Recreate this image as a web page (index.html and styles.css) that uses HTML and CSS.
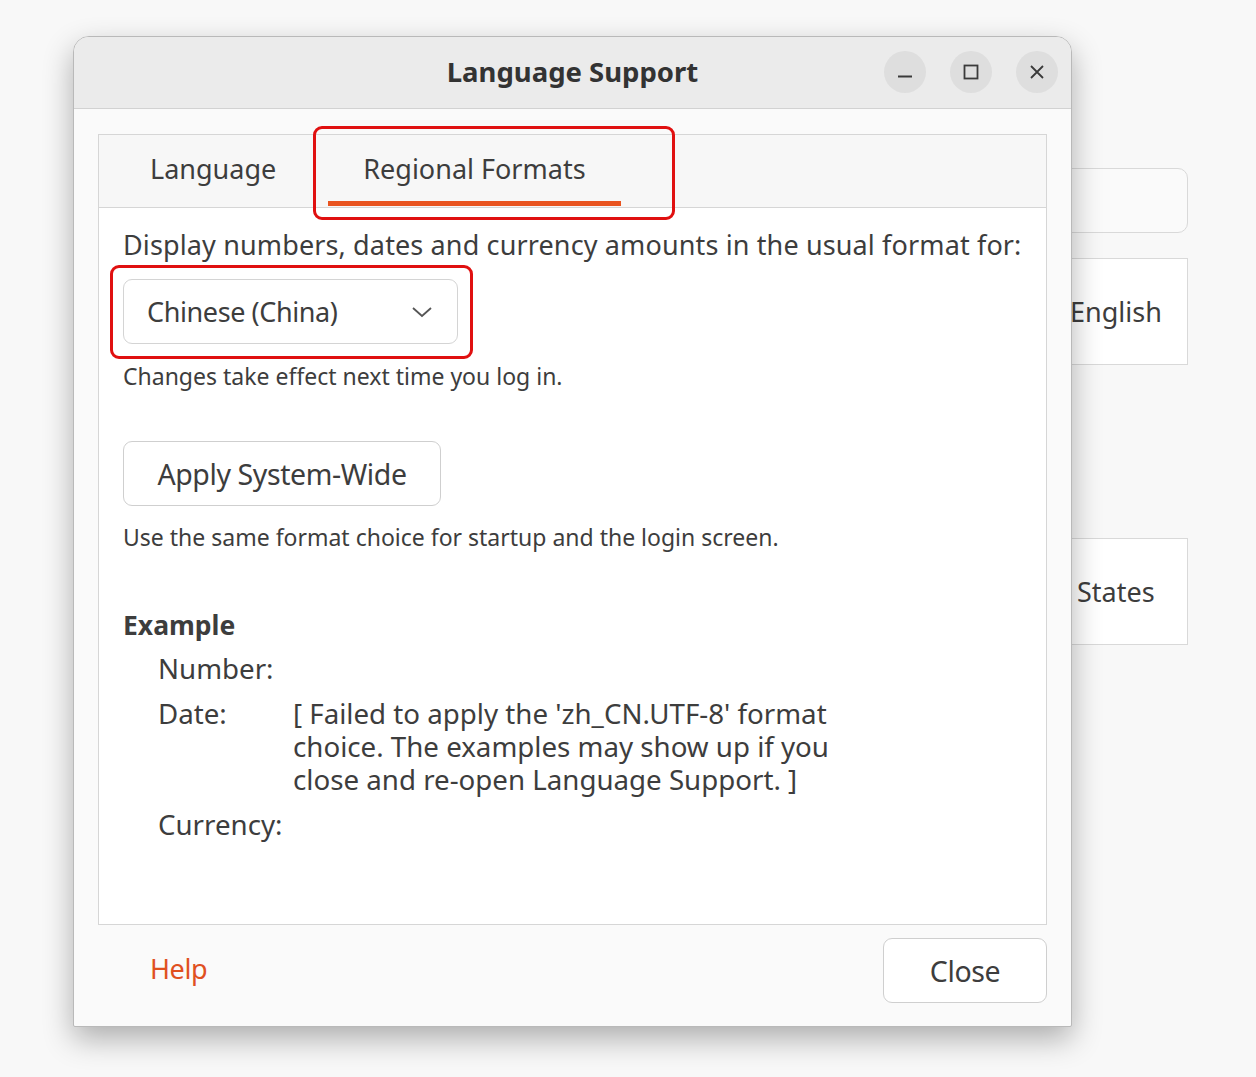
FILE: index.html
```html
<!DOCTYPE html>
<html lang="en">
<head>
  <meta charset="UTF-8">
  <title>Language Support</title>
  <link rel="stylesheet" href="styles.css">
</head>
<body>
<div class="desktop">
  <!-- the main window behind the dialog -->
  <div class="back-window">
    <div class="back-search"></div>
    <div class="back-row">English</div>
    <div class="back-row back-row-low">States</div>
  </div>

  <div class="dialog">
    <div class="titlebar">
      <div class="title">Language Support</div>
      <div class="win-buttons">
        <span class="win-btn">
          <svg width="16" height="16" viewBox="0 0 16 16"><path d="M1 12.5h14" stroke="#3a3a3a" stroke-width="1.8"/></svg>
        </span>
        <span class="win-btn">
          <svg width="16" height="16" viewBox="0 0 16 16"><rect x="1.5" y="1.5" width="13" height="13" fill="none" stroke="#3a3a3a" stroke-width="1.8"/></svg>
        </span>
        <span class="win-btn">
          <svg width="16" height="16" viewBox="0 0 16 16"><path d="M2 2l12 12M14 2L2 14" stroke="#3a3a3a" stroke-width="1.8"/></svg>
        </span>
      </div>
    </div>

    <div class="dialog-body">
      <div class="notebook">
        <div class="tabs">
          <div class="tab">Language</div>
          <div class="tab active">Regional Formats</div>
          <div class="mark mark-tab"></div>
        </div>
        <div class="page">
          <div class="lead">Display numbers, dates and currency amounts in the usual format for:</div>
          <div class="combo-wrap">
            <div class="combo">
              <span>Chinese (China)</span>
              <svg width="22" height="14" viewBox="0 0 22 14"><path d="M2 3l9 8 9-8" fill="none" stroke="#555" stroke-width="1.8"/></svg>
            </div>
            <div class="mark mark-combo"></div>
          </div>
          <div class="note">Changes take effect next time you log in.</div>
          <div class="btn apply">Apply System-Wide</div>
          <div class="note note-low">Use the same format choice for startup and the login screen.</div>

          <div class="example-head">Example</div>
          <div class="examples">
            <div class="ex-label">Number:</div>
            <div class="ex-value"></div>
            <div class="ex-label">Date:</div>
            <div class="ex-value">
              <div class="ex-line">[ Failed to apply the 'zh_CN.UTF-8' format</div>
              <div class="ex-line">choice. The examples may show up if you</div>
              <div class="ex-line">close and re-open Language Support. ]</div>
            </div>
            <div class="ex-label">Currency:</div>
            <div class="ex-value"></div>
          </div>
        </div>
      </div>

      <div class="footer">
        <a class="help">Help</a>
        <div class="btn close">Close</div>
      </div>
    </div>
  </div>
</div>
</body>
</html>
```

FILE: styles.css
```css
body {
  margin: 0;
  background: #f8f8f8;
  font-family: "Noto Sans", "Open Sans", sans-serif;
  color: #3d3d3d;
}
.desktop {
  position: relative;
  width: 1256px;
  height: 1077px;
  overflow: hidden;
}
.back-window {
  display: flex;
  flex-direction: column;
  width: 588px;
  margin-left: 600px;
  padding-top: 168px;
}
.back-search {
  height: 63px;
  border: 1px solid #d9d9d9;
  border-radius: 10px;
  background: #fafafa;
}
.back-row {
  height: 105px;
  margin-top: 25px;
  border: 1px solid #d9d9d9;
  background: #fff;
  display: flex;
  align-items: center;
  padding-left: 469px;
  font-size: 27px;
}
.back-row-low {
  margin-top: 173px;
  padding-left: 476px;
}
.dialog {
  position: absolute;
  left: 73px;
  top: 36px;
  width: 997px;
  height: 989px;
  border: 1px solid #b9b9b9;
  border-radius: 16px 16px 2px 2px;
  background: #fafafa;
  box-shadow: 0 12px 30px rgba(0, 0, 0, 0.3);
  display: flex;
  flex-direction: column;
  overflow: hidden;
}
.titlebar {
  height: 71px;
  flex: none;
  background: #ebebeb;
  border-bottom: 1px solid #d2d2d2;
  display: flex;
  align-items: center;
  justify-content: center;
  position: relative;
}
.title {
  font-weight: bold;
  font-size: 27.5px;
  color: #333;
  margin-bottom: 3px;
}
.win-buttons {
  position: absolute;
  right: 13px;
  top: 14px;
  display: flex;
  gap: 24px;
}
.win-btn {
  width: 42px;
  height: 42px;
  border-radius: 50%;
  background: #dedede;
  display: flex;
  align-items: center;
  justify-content: center;
}
.dialog-body {
  flex: 1;
  display: flex;
  flex-direction: column;
  padding: 25px 24px 0 24px;
}
.notebook {
  height: 789px;
  border: 1px solid #d6d6d6;
  display: flex;
  flex-direction: column;
}
.tabs {
  height: 72px;
  flex: none;
  background: #f7f7f7;
  border-bottom: 1px solid #d6d6d6;
  display: flex;
  padding-left: 16px;
  gap: 17px;
  position: relative;
}
.tab {
  padding: 0 35px 5px 35px;
  display: flex;
  align-items: center;
  font-size: 27px;
  position: relative;
}
.tab.active::after {
  content: "";
  position: absolute;
  left: 0;
  right: 0;
  bottom: 1px;
  height: 5px;
  background: #e95420;
}
.mark {
  position: absolute;
  border: 3px solid #e01010;
  border-radius: 9px;
}
.mark-tab {
  left: 214px;
  top: -9px;
  width: 356px;
  height: 88px;
}
.page {
  flex: 1;
  background: #fff;
  padding: 22px 24px 0 24px;
}
.lead {
  font-size: 27px;
  letter-spacing: 0.13px;
  line-height: 30px;
}
.combo-wrap {
  position: relative;
  margin-top: 19px;
  width: 335px;
}
.combo {
  height: 63px;
  border: 1px solid #d4d4d4;
  border-radius: 9px;
  background: #fff;
  display: flex;
  align-items: center;
  justify-content: space-between;
  padding: 0 24px 0 23px;
  font-size: 27px;
  letter-spacing: -0.4px;
}
.mark-combo {
  left: -13px;
  top: -14px;
  width: 357px;
  height: 88px;
}
.note {
  font-size: 23px;
  letter-spacing: 0;
  margin-top: 17px;
  line-height: 30px;
}
.note-low {
  margin-top: 16px;
}
.btn {
  border: 1px solid #cfcfcf;
  border-radius: 9px;
  background: #fff;
  display: flex;
  align-items: center;
  justify-content: center;
  font-size: 28.5px;
  letter-spacing: -0.4px;
}
.apply {
  width: 316px;
  height: 63px;
  margin-top: 50px;
}
.example-head {
  font-weight: bold;
  font-size: 26.5px;
  margin-top: 55px;
}
.examples {
  display: grid;
  grid-template-columns: 135px auto;
  row-gap: 12px;
  padding-left: 35px;
  margin-top: 9px;
  font-size: 27.7px;
  line-height: 33px;
}
.ex-line {
  height: 33px;
  white-space: nowrap;
}
.footer {
  flex: 1;
  display: flex;
  align-items: flex-start;
  justify-content: space-between;
  padding: 13px 0 0 52px;
}
.help {
  color: #e0501f;
  font-size: 27px;
  letter-spacing: -0.4px;
  margin-top: 12px;
}
.close {
  width: 162px;
  height: 63px;
}
```
